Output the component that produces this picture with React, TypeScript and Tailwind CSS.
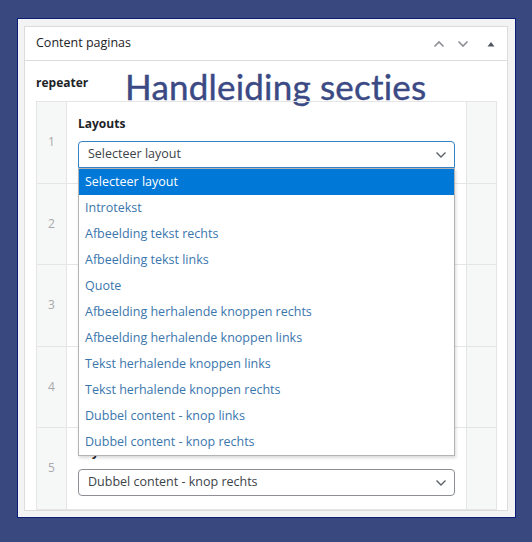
import { ReactNode } from "react";

const options = [
  "Selecteer layout",
  "Introtekst",
  "Afbeelding tekst rechts",
  "Afbeelding tekst links",
  "Quote",
  "Afbeelding herhalende knoppen rechts",
  "Afbeelding herhalende knoppen links",
  "Tekst herhalende knoppen links",
  "Tekst herhalende knoppen rechts",
  "Dubbel content - knop links",
  "Dubbel content - knop rechts",
];

function Chevron({ up = false, className = "", stroke = 1.8 }: { up?: boolean; className?: string; stroke?: number }) {
  return (
    <svg width="12" height="8" viewBox="0 0 12 8" className={className}>
      <polyline
        points={up ? "1.5,6.5 6,2 10.5,6.5" : "1.5,1.5 6,6 10.5,1.5"}
        fill="none"
        stroke="currentColor"
        strokeWidth={stroke}
      />
    </svg>
  );
}

function Select({ value, focused = false }: { value: string; focused?: boolean }) {
  return (
    <div
      className={`flex items-center justify-between h-[27px] pl-[9px] pr-[7px] bg-white border ${
        focused ? "border-[#3582c4] rounded-t-[4px]" : "border-[#8c8f94] rounded-[4px]"
      }`}
    >
      <span className="text-[12.5px] text-[#3c434a]">{value}</span>
      <Chevron className="text-[#5d6369]" stroke={1.4} />
    </div>
  );
}

function Row({ n, last = false, children }: { n: number; last?: boolean; children?: ReactNode }) {
  return (
    <div className="grid grid-cols-[30px_1fr_30px] h-[81.5px] border-b border-[#e5e5e5]">
      <div className="flex items-center justify-center bg-[#f6f7f7] border-r border-[#e5e5e5] text-[12px] text-[#a7aaad]">
        {n}
      </div>
      <div className={last ? "px-[11px] pt-[15px]" : "px-[11px] pt-[13px]"}>{children}</div>
      <div className="bg-[#f6f7f7] border-l border-[#e5e5e5]" />
    </div>
  );
}

function LayoutField({ value, focused = false }: { value: string; focused?: boolean }) {
  return (
    <>
      <div className="text-[12px] font-bold text-[#1d2327] leading-[18px] mb-[8px]">Layouts</div>
      <Select value={value} focused={focused} />
    </>
  );
}

export default function App() {
  return (
    <div
      className="w-[532px] h-[542px] bg-[#3a4880] pt-[18px] pl-[17px]"
      style={{ fontFamily: '"Open Sans", "Noto Sans", sans-serif' }}
    >
      <div className="relative w-[499px] h-[500px] border border-[#0b1f78] bg-[#f3f3f4] overflow-hidden pt-[7px] pl-[6px] pr-[7px]">
        <div className="bg-white border border-[#dcdcde]">
          {/* Header */}
          <div className="flex items-center justify-between h-[34px] border-b border-[#dcdcde] pl-[11px] pr-[4px]">
            <span className="text-[12.5px] text-[#1d2327]">Content paginas</span>
            <div className="flex items-center">
              <span className="w-[24px] flex justify-center text-[#8c8f94]">
                <Chevron up stroke={1.6} />
              </span>
              <span className="w-[24px] flex justify-center text-[#8c8f94]">
                <Chevron stroke={1.6} />
              </span>
              <span className="w-[24px] ml-[4px] flex justify-center">
                <svg width="8" height="6" viewBox="0 0 8 6">
                  <polygon points="0.5,5.5 4,1 7.5,5.5" fill="#50575e" />
                </svg>
              </span>
            </div>
          </div>

          {/* Body */}
          <div className="relative pl-[11px] pr-[10px] pt-[13px]">
            <div className="text-[12px] font-bold text-[#1d2327] leading-[18px] mb-[9px]">repeater</div>
            <div
              className="absolute left-[100px] top-[8px] text-[35px] text-[#3b4a84] leading-none tracking-[0.2px] [-webkit-text-stroke:0.4px_#3b4a84]"
              style={{ fontFamily: "Lato, sans-serif" }}
            >
              Handleiding secties
            </div>

            <div className="relative border-t border-l border-r border-[#e5e5e5]">
              <Row n={1}>
                <LayoutField value="Selecteer layout" focused />
              </Row>
              <Row n={2} />
              <Row n={3} />
              <Row n={4} />
              <Row n={5} last>
                <LayoutField value="Dubbel content - knop rechts" />
              </Row>

              {/* Open dropdown list */}
              <div className="absolute left-[41px] top-[66px] w-[377px] bg-white border border-[#b4b4b4] shadow-[1px_2px_3px_rgba(0,0,0,0.15)]">
                {options.map((o, i) => (
                  <div
                    key={o}
                    className={`h-[26px] flex items-center pl-[6px] text-[12.5px] ${
                      i === 0 ? "bg-[#0078d7] text-white" : "text-[#3a76ad]"
                    }`}
                  >
                    {o}
                  </div>
                ))}
              </div>
            </div>
          </div>
        </div>
      </div>
    </div>
  );
}
